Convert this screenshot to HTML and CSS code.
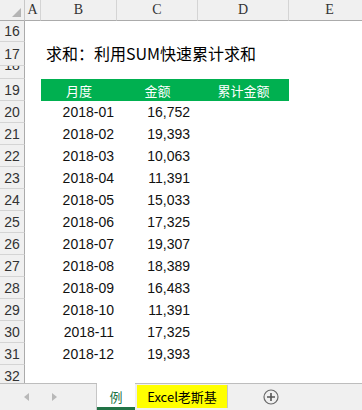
FILE: index.html
```html
<!DOCTYPE html>
<html>
<head>
<meta charset="utf-8">
<link rel="stylesheet" href="styles.css">
</head>
<body>
<div class="app">
  <div class="sheet">
    <div class="grid">
      <div class="corner"><span class="tri"></span></div>
      <div class="colh">A</div>
      <div class="colh">B</div>
      <div class="colh">C</div>
      <div class="colh">D</div>
      <div class="colh">E</div>

      <div class="rowh r16">16</div><div class="cell span5 r16"></div>

      <div class="rowh r17">17</div><div class="cell"></div><div class="cell title">求和：利用SUM快速累计求和</div>

      <div class="rowh r18 clipnum"><span>18</span></div><div class="cell span5 r18"></div>

      <div class="rowh">19</div><div class="cell"></div>
      <div class="cell hd">月度</div><div class="cell hd">金额</div><div class="cell hd">累计金额</div><div class="cell"></div>

      <div class="rowh">20</div><div class="cell"></div><div class="cell date">2018-01</div><div class="cell amt">16,752</div><div class="cell"></div><div class="cell"></div>
      <div class="rowh">21</div><div class="cell"></div><div class="cell date">2018-02</div><div class="cell amt">19,393</div><div class="cell"></div><div class="cell"></div>
      <div class="rowh">22</div><div class="cell"></div><div class="cell date">2018-03</div><div class="cell amt">10,063</div><div class="cell"></div><div class="cell"></div>
      <div class="rowh">23</div><div class="cell"></div><div class="cell date">2018-04</div><div class="cell amt">11,391</div><div class="cell"></div><div class="cell"></div>
      <div class="rowh">24</div><div class="cell"></div><div class="cell date">2018-05</div><div class="cell amt">15,033</div><div class="cell"></div><div class="cell"></div>
      <div class="rowh">25</div><div class="cell"></div><div class="cell date">2018-06</div><div class="cell amt">17,325</div><div class="cell"></div><div class="cell"></div>
      <div class="rowh">26</div><div class="cell"></div><div class="cell date">2018-07</div><div class="cell amt">19,307</div><div class="cell"></div><div class="cell"></div>
      <div class="rowh">27</div><div class="cell"></div><div class="cell date">2018-08</div><div class="cell amt">18,389</div><div class="cell"></div><div class="cell"></div>
      <div class="rowh">28</div><div class="cell"></div><div class="cell date">2018-09</div><div class="cell amt">16,483</div><div class="cell"></div><div class="cell"></div>
      <div class="rowh">29</div><div class="cell"></div><div class="cell date">2018-10</div><div class="cell amt">11,391</div><div class="cell"></div><div class="cell"></div>
      <div class="rowh">30</div><div class="cell"></div><div class="cell date">2018-11</div><div class="cell amt">17,325</div><div class="cell"></div><div class="cell"></div>
      <div class="rowh">31</div><div class="cell"></div><div class="cell date">2018-12</div><div class="cell amt">19,393</div><div class="cell"></div><div class="cell"></div>
      <div class="rowh">32</div><div class="cell span5"></div>
      <div class="rowh">33</div><div class="cell span5"></div>
    </div>
  </div>
  <div class="tabbar">
    <div class="navs">
      <span class="nav"><svg width="6" height="8" viewBox="0 0 6 8"><path d="M5 0 L0 4 L5 8 Z" fill="#b8b8b8"/></svg></span>
      <span class="nav"><svg width="6" height="8" viewBox="0 0 6 8"><path d="M1 0 L6 4 L1 8 Z" fill="#b8b8b8"/></svg></span>
    </div>
    <div class="tab active">例</div>
    <div class="tab yellow">Excel老斯基</div>
    <div class="addwrap">
      <svg class="add" width="16" height="16" viewBox="0 0 16 16">
        <circle cx="8" cy="8" r="7" fill="none" stroke="#6a6a6a" stroke-width="1.2"/>
        <path d="M8 4 V12 M4 8 H12" stroke="#555" stroke-width="1.6"/>
      </svg>
    </div>
  </div>
</div>
</body>
</html>
```

FILE: styles.css
```css
html, body {
  margin: 0;
  padding: 0;
  background: #ffffff;
}
.app {
  width: 362px;
  height: 410px;
  overflow: hidden;
  display: flex;
  flex-direction: column;
  font-family: "Liberation Sans", "Noto Sans CJK SC", sans-serif;
}
.sheet {
  height: 383px;
  overflow: hidden;
  flex: none;
}
.grid {
  display: grid;
  grid-template-columns: 25px 16px 76px 81px 91px 82px;
  grid-template-rows: 21px 21px 24px 13px repeat(15, 22px);
  width: 371px;
}
.corner {
  background: #f0f0f0;
  border-right: 1px solid #c8c8c8;
  border-bottom: 1px solid #ababab;
  position: relative;
}
.tri {
  position: absolute;
  right: 3px;
  bottom: 3px;
  width: 0;
  height: 0;
  border-left: 9px solid transparent;
  border-bottom: 9px solid #b4b4b4;
}
.colh {
  background: #f0f0f0;
  border-right: 1px solid #d4d4d4;
  border-bottom: 1px solid #ababab;
  display: flex;
  align-items: center;
  justify-content: center;
  font-family: "Liberation Serif", "DejaVu Serif", serif;
  font-size: 14px;
  color: #333;
}
.rowh {
  background: #f0f0f0;
  border-right: 1px solid #ababab;
  border-bottom: 1px solid #d4d4d4;
  display: flex;
  align-items: center;
  justify-content: center;
  font-family: "Liberation Sans", sans-serif;
  font-size: 14px;
  color: #333;
  box-sizing: border-box;
  overflow: hidden;
}
.clipnum span {
  line-height: 16px;
  margin-top: -14px;
}
.cell {
  display: flex;
  align-items: center;
  font-size: 14px;
  color: #111;
  white-space: nowrap;
  overflow: visible;
}
.span5 {
  grid-column: 2 / span 5;
}
.title {
  grid-column: 3 / span 4;
  font-family: "Noto Sans CJK SC", sans-serif;
  font-size: 16px;
  align-items: flex-end;
  padding-bottom: 1px;
  color: #000;
  margin-left: -76px;
  padding-left: 81px;
  overflow: hidden;
}
.hd {
  background: #00b050;
  color: #ffffff;
  justify-content: center;
  font-family: "Noto Sans CJK SC", sans-serif;
  font-size: 13px;
}
.date {
  justify-content: flex-end;
  padding-right: 3px;
}
.amt {
  justify-content: flex-end;
  padding-right: 8px;
}
.tabbar {
  flex: 1;
  background: #f0f0f0;
  border-top: 1px solid #bdbdbd;
  display: flex;
  align-items: stretch;
  font-family: "Noto Sans CJK SC", sans-serif;
  font-size: 13px;
}
.navs {
  width: 97px;
  display: flex;
  align-items: center;
  padding-left: 24px;
  gap: 21px;
  box-sizing: border-box;
  border-right: 1px solid #c6c6c6;
}
.nav {
  display: flex;
  align-items: center;
}
.tab {
  display: flex;
  align-items: center;
  justify-content: center;
  box-sizing: border-box;
  margin-top: -1px;
}
.active {
  width: 38px;
  background: #ffffff;
  color: #217346;
  border-bottom: 3px solid #217346;
  padding-top: 2px;
}
.yellow {
  width: 91px;
  background: #ffff00;
  color: #000;
  margin-left: 2px;
  margin-top: 1px;
  margin-bottom: 2px;
  border-right: 1px solid #c6c6c6;
}
.addwrap {
  display: flex;
  align-items: center;
  padding-left: 35px;
}
```
